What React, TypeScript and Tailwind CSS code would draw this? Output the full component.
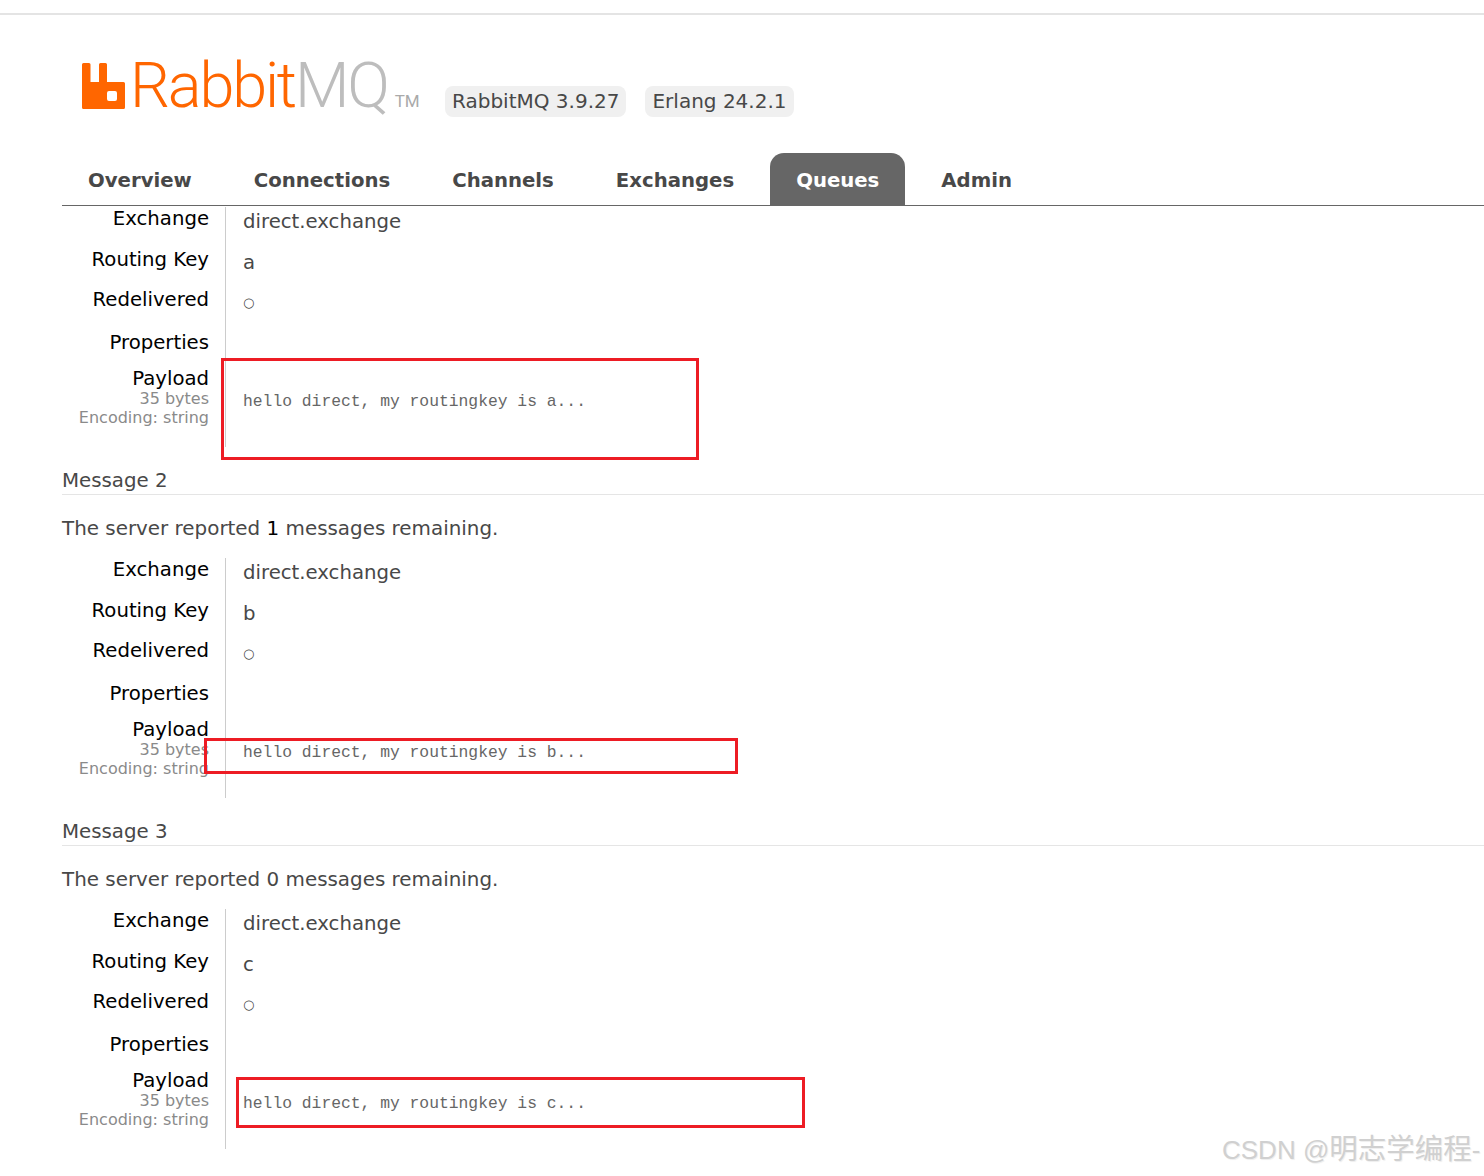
const sans = { fontFamily: '"DejaVu Sans", sans-serif' }

const tabs = ['Overview', 'Connections', 'Channels', 'Exchanges', 'Queues', 'Admin']

function Logo() {
  return (
    <div className="mb-[10px] flex w-[337px] items-end">
      <svg width="43" height="46" viewBox="0 0 43 46" className="shrink-0">
        <path
          fill="#ff6600"
          fillRule="evenodd"
          d="M1.500 0h5.500a1.500 1.500 0 0 1 1.500 1.500V19H17V1.500A1.500 1.500 0 0 1 18.500 0h5A1.500 1.500 0 0 1 25 1.500V19h16.500A1.500 1.500 0 0 1 43 20.500V44.500a1.500 1.500 0 0 1-1.500 1.500H1.500A1.500 1.500 0 0 1 0 44.500V1.500A1.500 1.500 0 0 1 1.500 0zM27 28a2 2 0 0 0-2 2v6a2 2 0 0 0 2 2h6a2 2 0 0 0 2-2v-6a2 2 0 0 0-2-2z"
        />
      </svg>
      <span className="ml-[5px] text-[63px] leading-[46px] font-light tracking-[-2.2px] text-[#ff6600]" style={{ fontFamily: 'Roboto, sans-serif' }}>
        Rabbit<span className="text-[#bdbdbd]">MQ</span>
      </span>
      <span className="ml-[7px] mb-[-1px] text-[17px] leading-[17px] text-[#aaaaaa]" style={{ fontFamily: 'Roboto, sans-serif' }}>
        TM
      </span>
    </div>
  )
}

function Row({ label, value, height, dot }: { label: string; value?: string; height: string; dot?: boolean }) {
  return (
    <div className={`flex ${height}`}>
      <div className="w-[147px] text-right text-[19.7px] leading-[24px] text-black">{label}</div>
      <div className={`ml-[16px] border-l border-[#cccccc] pl-[17px] pt-[4px] leading-[22px] text-[#484848] ${dot ? 'text-[13px]' : 'text-[19.7px]'}`}>{value}</div>
    </div>
  )
}

function MessageTable({ routingKey, text, box }: { routingKey: string; text: string; box: string }) {
  return (
    <div className="relative h-[240px]">
      <Row label="Exchange" value="direct.exchange" height="h-[41px]" />
      <Row label="Routing Key" value={routingKey} height="h-[40px]" />
      <Row label="Redelivered" value="○" height="h-[43px]" dot />
      <Row label="Properties" height="h-[36px]" />
      <div className="flex h-[80px]">
        <div className="w-[147px] text-right">
          <div className="text-[19.7px] leading-[24px] text-black">Payload</div>
          <div className="-mt-[2px] text-[16px] leading-[19px] text-[#8a8a8a]">35 bytes</div>
          <div className="text-[16px] leading-[19px] text-[#8a8a8a]">Encoding: string</div>
        </div>
        <div className="ml-[16px] border-l border-[#cccccc] pl-[17px] pt-[25px]">
          <pre className="text-[16.33px] leading-[20px] text-[#666666]" style={{ fontFamily: '"Liberation Mono", monospace' }}>
            {text}
          </pre>
        </div>
      </div>
      <div className={`absolute border-[3px] border-[#ed1c24] ${box}`} />
    </div>
  )
}

function MessageBlock({ n, remaining, bold, routingKey, box }: { n: number; remaining: number; bold?: boolean; routingKey: string; box: string }) {
  return (
    <div>
      <h2 className="mt-[21px] h-[27px] border-b border-[#e5e5e5] text-[19.8px] leading-[26px] text-[#484848]">Message {n}</h2>
      <p className="mt-[21px] h-[22px] text-[19.9px] leading-[26px] text-[#484848]">
        The server reported {bold ? <b className="font-normal text-black">{remaining}</b> : remaining} messages remaining.
      </p>
      <div className="mt-[20px]">
        <MessageTable routingKey={routingKey} text={`hello direct, my routingkey is ${routingKey}...`} box={box} />
      </div>
    </div>
  )
}

export default function App() {
  return (
    <div className="relative h-[1176px] w-[1484px] overflow-hidden bg-white" style={sans}>
      <div className="h-[15px] border-b-2 border-[#e4e4e4]" />

      <header className="flex h-[104px] items-end pl-[82px]">
        <Logo />
        <div className="mb-[2px] ml-[26px] flex gap-[19px]">
          <span className="h-[31px] rounded-[8px] bg-[#f0f0f0] px-[7px] text-[20px] leading-[31px] text-[#484848]">RabbitMQ 3.9.27</span>
          <span className="h-[31px] rounded-[8px] bg-[#f0f0f0] px-[7px] text-[20px] leading-[31px] text-[#484848]">Erlang 24.2.1</span>
        </div>
      </header>

      <div className="ml-[62px]">
        <nav className="mt-[34px] flex h-[53px] items-stretch gap-[10px] border-b border-[#666666]">
          {tabs.map((t) => (
            <span
              key={t}
              className={
                t === 'Queues'
                  ? 'rounded-t-[14px] bg-[#666666] px-[26px] pt-[15px] text-[19.7px] font-bold leading-[26px] text-white'
                  : 'px-[26px] pt-[15px] text-[19.7px] font-bold leading-[26px] text-[#484848]'
              }
            >
              {t}
            </span>
          ))}
        </nav>
        <div className="pt-[1px]">
          <MessageTable routingKey="a" text="hello direct, my routingkey is a..." box="left-[159px] top-[151px] h-[102px] w-[478px]" />
          <MessageBlock n={2} remaining={1} bold routingKey="b" box="left-[142px] top-[180px] h-[36px] w-[534px]" />
          <MessageBlock n={3} remaining={0} routingKey="c" box="left-[174px] top-[168px] h-[51px] w-[569px]" />
        </div>
      </div>

      <div
        className="absolute left-[1222px] top-[1130px] whitespace-nowrap text-[26px] leading-[38px] text-[#d0d0d0] [text-shadow:1px_1px_1px_#eeeeee]"
        style={{ fontFamily: '"Liberation Sans", "Noto Sans CJK SC", sans-serif' }}
      >
        CSDN @<span className="text-[28.5px]">明志学编程</span>-
      </div>
    </div>
  )
}
